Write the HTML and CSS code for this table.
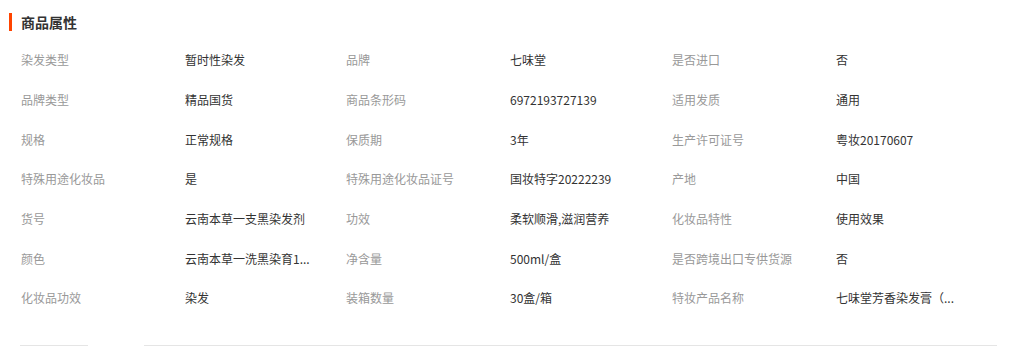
FILE: index.html
```html
<!DOCTYPE html>
<html lang="zh">
<head>
<meta charset="utf-8">
<link rel="stylesheet" href="styles.css">
</head>
<body>
<div class="page">
  <h2 class="title">商品属性</h2>
  <div class="grid">
    <div class="k">染发类型</div><div class="v">暂时性染发</div>
    <div class="k">品牌</div><div class="v">七味堂</div>
    <div class="k">是否进口</div><div class="v">否</div>

    <div class="k">品牌类型</div><div class="v">精品国货</div>
    <div class="k">商品条形码</div><div class="v">6972193727139</div>
    <div class="k">适用发质</div><div class="v">通用</div>

    <div class="k">规格</div><div class="v">正常规格</div>
    <div class="k">保质期</div><div class="v">3年</div>
    <div class="k">生产许可证号</div><div class="v">粤妆20170607</div>

    <div class="k">特殊用途化妆品</div><div class="v">是</div>
    <div class="k">特殊用途化妆品证号</div><div class="v">国妆特字20222239</div>
    <div class="k">产地</div><div class="v">中国</div>

    <div class="k">货号</div><div class="v">云南本草一支黑染发剂</div>
    <div class="k">功效</div><div class="v">柔软顺滑,滋润营养</div>
    <div class="k">化妆品特性</div><div class="v">使用效果</div>

    <div class="k">颜色</div><div class="v">云南本草一洗黑染育1...</div>
    <div class="k">净含量</div><div class="v">500ml/盒</div>
    <div class="k">是否跨境出口专供货源</div><div class="v">否</div>

    <div class="k">化妆品功效</div><div class="v">染发</div>
    <div class="k">装箱数量</div><div class="v">30盒/箱</div>
    <div class="k">特妆产品名称</div><div class="v">七味堂芳香染发膏（...</div>
  </div>
  <div class="below">
    <div class="box small"></div>
    <div class="box wide"></div>
  </div>
</div>
</body>
</html>
```
FILE: styles.css
```css
html, body {
  margin: 0;
  padding: 0;
  background: #fff;
}
body {
  font-family: "Noto Sans CJK SC", "Noto Sans", sans-serif;
  color: #333;
  overflow: hidden;
}
.page {
  padding: 13px 0 0 9px;
}
.title {
  margin: 0;
  font-size: 14px;
  font-weight: bold;
  line-height: 18px;
  color: #333;
  border-left: 3px solid #ff4400;
  padding-left: 9px;
  height: 18px;
}
.grid {
  display: grid;
  grid-template-columns: 164px 161px 164px 162px 164px 162px;
  grid-auto-rows: 39.7px;
  margin-top: 9px;
  padding-left: 12px;
  font-size: 12px;
  align-items: center;
}
.k {
  color: #999;
  white-space: nowrap;
}
.v {
  color: #333;
  white-space: nowrap;
}
.below {
  display: flex;
  gap: 56px;
  margin-top: 27px;
  padding-left: 11px;
}
.box {
  height: 1px;
  border-top: 1px solid #e5e5e5;
}
.small { width: 68px; }
.wide { width: 853px; }
```
